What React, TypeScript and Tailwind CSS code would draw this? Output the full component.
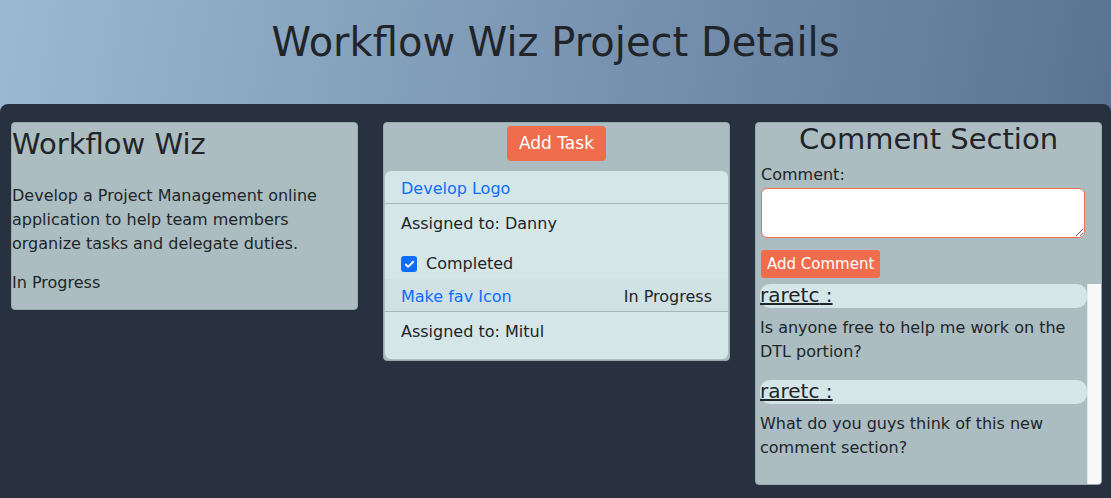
import { Check } from "lucide-react";

const tasks = [
  { name: "Develop Logo", assignee: "Danny", status: "", done: true },
  { name: "Make fav Icon", assignee: "Mitul", status: "In Progress", done: false },
];

const comments = [
  { author: "raretc", body: "Is anyone free to help me work on the DTL portion?" },
  { author: "raretc", body: "What do you guys think of this new comment section?" },
];

export default function App() {
  return (
    <div className="min-h-screen bg-[linear-gradient(100deg,#9bb9d2,#566f90)] font-['DejaVu_Sans',sans-serif] text-[#212529]">
      <header className="h-[104px]">
        <h1 className="pt-[18px] text-center text-[40px] leading-[48px]">
          Workflow Wiz Project Details
        </h1>
      </header>

      <main className="min-h-[394px] rounded-t-[8px] bg-[#283140] pt-[18px] pl-[11px] pr-[9px]">
        <div className="grid grid-cols-3 items-start gap-[25px]">
          {/* project */}
          <section className="rounded-[4px] border border-[#98a9ad] bg-[#abbdc1] pb-[14px]">
            <h2 className="mt-[2px] text-[29px] leading-[38px]">Workflow Wiz</h2>
            <p className="mt-[21px] text-[16px] leading-6">
              Develop a Project Management online application to help team members organize tasks and
              delegate duties.
            </p>
            <p className="mt-[15px] text-[16px] leading-6">In Progress</p>
          </section>

          {/* tasks */}
          <section className="rounded-[4px] border border-[#98a9ad] bg-[#abbdc1] px-px pb-px">
            <div className="flex justify-center pt-[3px] pb-[10px]">
              <button className="h-[35px] rounded-[4px] bg-[#ef6c4d] px-[12px] text-[17px] text-white">
                Add Task
              </button>
            </div>
            <ul className="overflow-hidden rounded-[6px] bg-[#d4e6e8]">
              {tasks.map((t) => (
                <li key={t.name}>
                  <div
                    className={`flex h-[33px] items-center justify-between border-b border-[#a6b5b8] px-[16px] pt-[4px] text-[16px] ${
                      t.done ? "" : "bg-[#cfe1e3]"
                    }`}
                  >
                    <a className="text-[#0d6efd]">{t.name}</a>
                    <span>{t.status}</span>
                  </div>
                  <div
                    className={`px-[16px] pt-[8px] text-[16px] leading-6 ${t.done ? "pb-[3px]" : "pb-[15px]"}`}
                  >
                    <p>Assigned to: {t.assignee}</p>
                    {t.done && (
                      <label className="mt-[16px] flex items-center gap-[9px]">
                        <span className="flex h-[16px] w-[16px] items-center justify-center rounded-[3px] bg-[#0d6efd]">
                          <Check className="h-[11px] w-[11px] text-white" strokeWidth={4} />
                        </span>
                        Completed
                      </label>
                    )}
                  </div>
                </li>
              ))}
            </ul>
          </section>

          {/* comments */}
          <section className="flex h-[363px] flex-col overflow-hidden rounded-[4px] border border-[#98a9ad] bg-[#abbdc1]">
            <h2 className="pt-px text-center text-[29px] leading-[30px]">Comment Section</h2>
            <div className="px-[5px]">
              <label className="mt-[11px] block text-[16px] leading-5">Comment:</label>
              <textarea className="mt-[3px] block h-[50px] w-[324px] rounded-[6px] border border-[#ef6c4d] bg-white" />
              <button className="mt-[12px] h-[28px] rounded-[3px] bg-[#ef6c4d] px-[6px] text-[15px] text-white">
                Add Comment
              </button>
            </div>
            <div className="mt-[6px] flex flex-1">
              <div className="flex-1 pl-[4px]">
                {comments.map((c, i) => (
                  <div key={i}>
                    <div className="h-[24px] rounded-[10px] bg-[#d4e6e8] text-[20px] leading-[22px]">
                      <u>{c.author} :</u>
                    </div>
                    <p className="mt-[8px] mb-[16px] pr-[6px] text-[16px] leading-6">{c.body}</p>
                  </div>
                ))}
              </div>
              <div className="w-[14px] border-l border-[#e6e6e6] bg-[#f9f9f9]" />
            </div>
          </section>
        </div>
      </main>
    </div>
  );
}
